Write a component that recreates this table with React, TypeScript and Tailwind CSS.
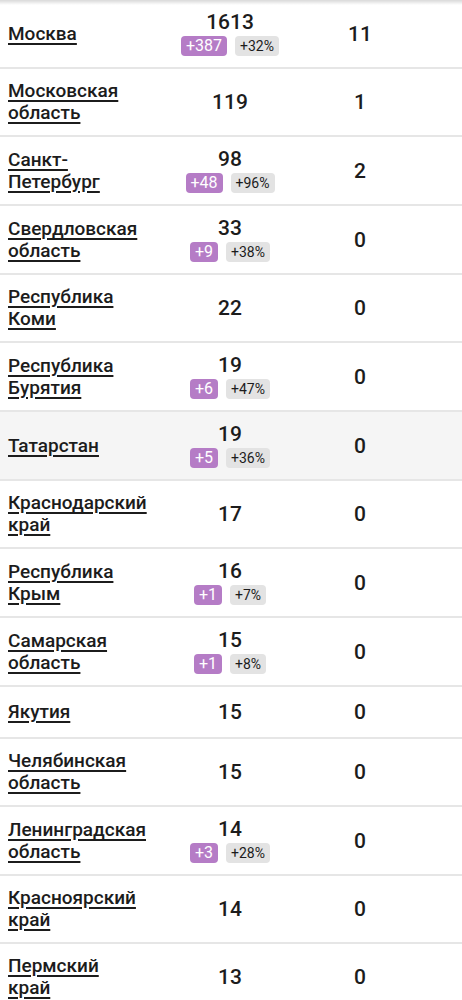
type Region = {
  name: string[]
  total: number
  delta?: string
  percent?: string
  deaths: number
  highlighted?: boolean
}

const regions: Region[] = [
  { name: ['Москва'], total: 1613, delta: '+387', percent: '+32%', deaths: 11 },
  { name: ['Московская', 'область'], total: 119, deaths: 1 },
  { name: ['Санкт-', 'Петербург'], total: 98, delta: '+48', percent: '+96%', deaths: 2 },
  { name: ['Свердловская', 'область'], total: 33, delta: '+9', percent: '+38%', deaths: 0 },
  { name: ['Республика', 'Коми'], total: 22, deaths: 0 },
  { name: ['Республика', 'Бурятия'], total: 19, delta: '+6', percent: '+47%', deaths: 0 },
  { name: ['Татарстан'], total: 19, delta: '+5', percent: '+36%', deaths: 0, highlighted: true },
  { name: ['Краснодарский', 'край'], total: 17, deaths: 0 },
  { name: ['Республика', 'Крым'], total: 16, delta: '+1', percent: '+7%', deaths: 0 },
  { name: ['Самарская', 'область'], total: 15, delta: '+1', percent: '+8%', deaths: 0 },
  { name: ['Якутия'], total: 15, deaths: 0 },
  { name: ['Челябинская', 'область'], total: 15, deaths: 0 },
  { name: ['Ленинградская', 'область'], total: 14, delta: '+3', percent: '+28%', deaths: 0 },
  { name: ['Красноярский', 'край'], total: 14, deaths: 0 },
  { name: ['Пермский', 'край'], total: 13, deaths: 0 },
]

function RegionRow({ region }: { region: Region }) {
  return (
    <div
      className={
        region.highlighted
          ? 'grid min-h-[52px] grid-cols-[160px_140px_120px_1fr] items-center border-b-2 border-[#e6e6e6] bg-[#f5f5f5] py-[11px]'
          : 'grid min-h-[52px] grid-cols-[160px_140px_120px_1fr] items-center border-b-2 border-[#e6e6e6] bg-white py-[11px]'
      }
    >
      <div className="pl-2 text-[19px] font-medium leading-[22px] text-[#1c1c1c]">
        {region.name.map((line) => (
          <div key={line}>
            <a href="#" className="underline decoration-[1.5px] underline-offset-[3px]">
              {line}
            </a>
          </div>
        ))}
      </div>
      <div className="flex flex-col items-center">
        <div className="text-[21px] font-medium leading-[22px] text-[#1c1c1c]">{region.total}</div>
        {region.delta && (
          <div className="mt-[3px] flex items-center gap-2">
            <span className="flex h-5 items-center rounded-[4px] bg-[#b57cc6] px-[5px] text-[16px] leading-none text-white">
              {region.delta}
            </span>
            <span className="flex h-5 items-center rounded-[4px] bg-[#e3e3e3] px-[5px] text-[14px] leading-none text-[#1c1c1c]">
              {region.percent}
            </span>
          </div>
        )}
      </div>
      <div className="text-center text-[21px] font-medium leading-[22px] text-[#1c1c1c]">{region.deaths}</div>
      <div />
    </div>
  )
}

export default function App() {
  return (
    <div className="relative h-[1000px] w-[462px] overflow-hidden bg-white font-['Roboto',_'Noto_Sans',_sans-serif]">
      <div className="pointer-events-none absolute inset-x-0 top-0 h-[5px] bg-gradient-to-b from-black/15 to-transparent" />
      {regions.map((region) => (
        <RegionRow key={region.name.join(' ')} region={region} />
      ))}
    </div>
  )
}
